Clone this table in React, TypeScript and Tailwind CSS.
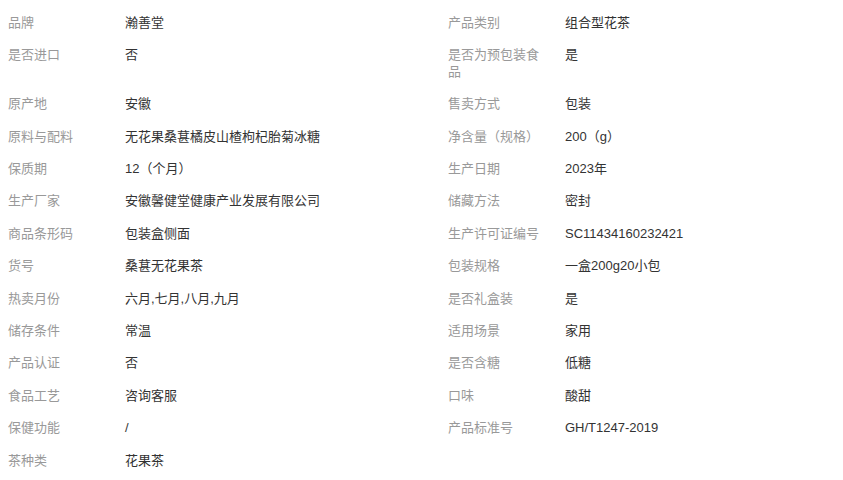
const rows: [string, string, string?, string?][] = [
  ['品牌', '瀚善堂', '产品类别', '组合型花茶'],
  ['是否进口', '否', '是否为预包装食品', '是'],
  ['原产地', '安徽', '售卖方式', '包装'],
  ['原料与配料', '无花果桑葚橘皮山楂枸杞胎菊冰糖', '净含量（规格）', '200（g）'],
  ['保质期', '12（个月）', '生产日期', '2023年'],
  ['生产厂家', '安徽馨健堂健康产业发展有限公司', '储藏方法', '密封'],
  ['商品条形码', '包装盒侧面', '生产许可证编号', 'SC11434160232421'],
  ['货号', '桑葚无花果茶', '包装规格', '一盒200g20小包'],
  ['热卖月份', '六月,七月,八月,九月', '是否礼盒装', '是'],
  ['储存条件', '常温', '适用场景', '家用'],
  ['产品认证', '否', '是否含糖', '低糖'],
  ['食品工艺', '咨询客服', '口味', '酸甜'],
  ['保健功能', '/', '产品标准号', 'GH/T1247-2019'],
  ['茶种类', '花果茶'],
];

const Label = ({ text }: { text?: string }) => (
  <div className="py-2 pr-4 text-[#999999]">{text}</div>
);

const Value = ({ text }: { text?: string }) => (
  <div className="py-2 pr-4 text-[#333333]">{text}</div>
);

const App = () => {
  return (
    <div className="min-h-screen bg-white pl-2 pt-[7px] font-['Liberation_Sans','Noto_Sans_CJK_SC',sans-serif] text-[13px] leading-[16.4px]">
      <div className="grid grid-cols-[117px_323px_117px_1fr] items-start">
        {rows.map(([k1, v1, k2, v2]) => (
          <div key={k1} className="contents">
            <Label text={k1} />
            <Value text={v1} />
            <Label text={k2} />
            <Value text={v2} />
          </div>
        ))}
      </div>
    </div>
  );
};

export default App;
